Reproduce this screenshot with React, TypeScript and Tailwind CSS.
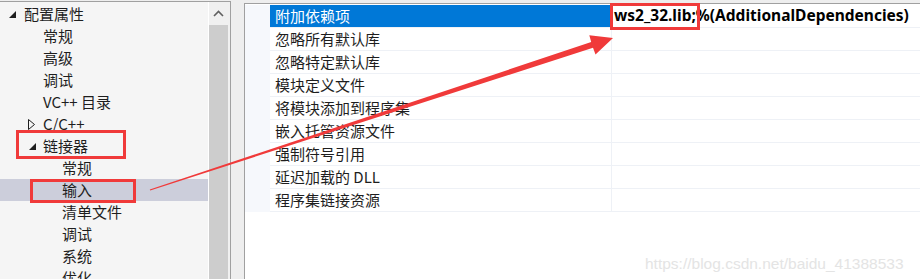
import React from "react";

const cjk = { fontFamily: '"Noto Sans CJK SC", "Noto Sans", sans-serif' };

type TreeItem = { label: string; indent: number; icon?: "open" | "closed"; selected?: boolean };

const tree: TreeItem[] = [
  { label: "配置属性", indent: 0, icon: "open" },
  { label: "常规", indent: 1 },
  { label: "高级", indent: 1 },
  { label: "调试", indent: 1 },
  { label: "VC++ 目录", indent: 1 },
  { label: "C/C++", indent: 1, icon: "closed" },
  { label: "链接器", indent: 1, icon: "open" },
  { label: "常规", indent: 2 },
  { label: "输入", indent: 2, selected: true },
  { label: "清单文件", indent: 2 },
  { label: "调试", indent: 2 },
  { label: "系统", indent: 2 },
  { label: "优化", indent: 2 },
];

const props = [
  "附加依赖项",
  "忽略所有默认库",
  "忽略特定默认库",
  "模块定义文件",
  "将模块添加到程序集",
  "嵌入托管资源文件",
  "强制符号引用",
  "延迟加载的 DLL",
  "程序集链接资源",
];

function TreeRow({ item }: { item: TreeItem }) {
  const pl = item.indent === 0 ? "pl-[8px]" : item.indent === 1 ? "pl-[28px]" : "pl-[62px]";
  return (
    <div
      className={`h-[22px] flex items-center ${pl} ${item.selected ? "bg-[#cccedb]" : ""} text-[15px] text-[#1e1e1e] whitespace-nowrap`}
      style={cjk}
    >
      {item.indent < 2 && (
        <span className="w-[15px] h-[22px] flex items-center shrink-0">
          {item.icon === "open" && (
            <svg width="9" height="9" viewBox="0 0 9 9">
              <polygon points="8,1 8,8 1,8" fill="#1e1e1e" />
            </svg>
          )}
          {item.icon === "closed" && (
            <svg width="8" height="11" viewBox="0 0 8 11">
              <polygon points="0.5,0.5 6.5,5.5 0.5,10.5" fill="none" stroke="#1e1e1e" strokeWidth="1" />
            </svg>
          )}
        </span>
      )}
      <span className={item.indent === 0 ? "ml-[1px]" : ""}>{item.label}</span>
    </div>
  );
}

export default function App() {
  return (
    <div className="relative w-[920px] h-[279px] overflow-hidden bg-[#eeeeee] flex">
      {/* Left pane */}
      <div className="w-[231px] h-[278px] mt-[1px] border-t border-r border-[#a0a0a0] flex shrink-0">
        <div className="w-[208px] bg-[#f5f5f5] pt-[1px] overflow-hidden">
          {tree.map((t, i) => (
            <TreeRow key={i} item={t} />
          ))}
        </div>
        <div className="w-[1px] bg-white" />
        <div className="w-[19px] bg-[#f0f0f0] flex flex-col">
          <div className="h-[23px] flex items-center justify-center">
            <svg width="11" height="7" viewBox="0 0 11 7">
              <polyline points="1,6 5.5,1.5 10,6" fill="none" stroke="#606060" strokeWidth="1.6" />
            </svg>
          </div>
          <div className="flex-1 bg-[#cdcdcd]" />
        </div>
        <div className="w-[2px] bg-[#f0f0f0]" />
      </div>
      {/* Gap */}
      <div className="w-[13px] shrink-0" />
      {/* Right pane */}
      <div className="flex-1 mt-[3px] border-t border-l border-[#a0a0a0] bg-white pt-[1px]">
        {props.map((p, i) => (
          <div key={i} className="h-[23px] flex">
            <div className="w-[25px] bg-[#f6f8fc] shrink-0" />
            <div
              className={`w-[341px] shrink-0 flex items-center pl-[5px] text-[15px] border-b border-[#eef1f6] ${
                i === 0 ? "bg-[#0078d7] text-white" : "text-[#1e1e1e]"
              }`}
              style={cjk}
            >
              {p}
            </div>
            <div className="flex-1 border-l border-b border-[#eef1f6] flex items-center pl-[2px]">
              {i === 0 && (
                <span
                  className="text-[15.5px] font-bold text-black whitespace-nowrap"
                  style={{ fontFamily: '"Noto Sans", "Open Sans", sans-serif' }}
                >
                  ws2_32.lib;%(AdditionalDependencies)
                </span>
              )}
            </div>
          </div>
        ))}
      </div>

      {/* Watermark */}
      <div
        className="absolute left-[645px] top-[252px] text-[15.5px] text-[#e4e4e4] whitespace-nowrap"
        style={{ fontFamily: '"Liberation Sans", Arial, sans-serif' }}
      >
        https://blog.csdn.net/baidu_41388533
      </div>

      {/* Red annotation boxes */}
      <div className="absolute left-[16px] top-[130px] w-[110px] h-[29px] border-[3px] border-[#f03a3a]" />
      <div className="absolute left-[30px] top-[179px] w-[106px] h-[24px] border-[3px] border-[#f03a3a]" />
      <div className="absolute left-[610px] top-[3px] w-[90px] h-[27px] border-[3px] border-[#f03a3a]" />

      {/* Arrow */}
      <svg className="absolute left-0 top-0" width="920" height="279" viewBox="0 0 920 279">
        <polygon
          points="149.8,189.5 591.2,42.0 589.3,35.3 613,38 595.5,54.5 593.0,47.8 150.2,190.5"
          fill="#f03a3a"
        />
      </svg>
    </div>
  );
}
